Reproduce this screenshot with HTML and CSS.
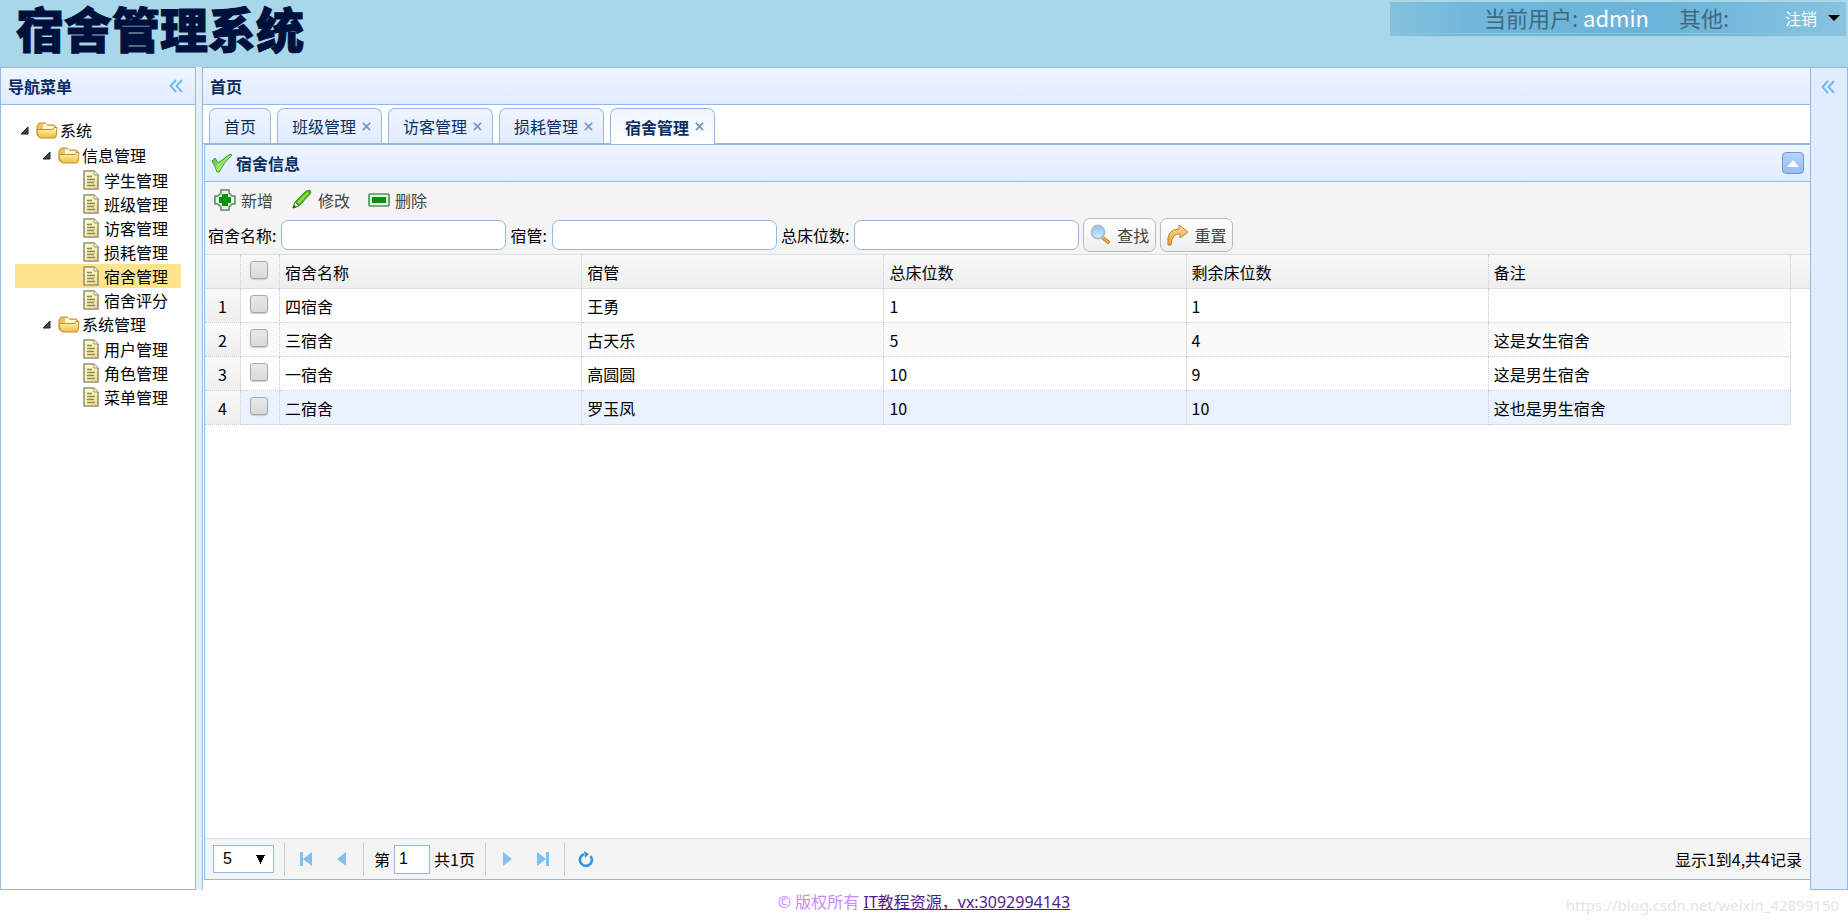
FILE: index.html
```html
<!DOCTYPE html>
<html lang="zh-CN">
<head>
<meta charset="utf-8">
<title>宿舍管理系统</title>
<link rel="stylesheet" href="styles.css">
</head>
<body>
<svg class="defs" aria-hidden="true">
  <defs>
    <linearGradient id="gold" x1="0" y1="0" x2="0" y2="1"><stop offset="0" stop-color="#fff6b8"/><stop offset="1" stop-color="#f0bd3e"/></linearGradient>
    <linearGradient id="leaf" x1="0" y1="0" x2="1" y2="1"><stop offset="0" stop-color="#3fae35"/><stop offset=".6" stop-color="#a6f06a"/><stop offset="1" stop-color="#3d9b36"/></linearGradient>
    <linearGradient id="orange" x1="0" y1="0" x2="0" y2="1"><stop offset="0" stop-color="#fde3a0"/><stop offset="1" stop-color="#f09a1c"/></linearGradient>
    <linearGradient id="lens" x1="0" y1="0" x2="0" y2="1"><stop offset="0" stop-color="#8cc3fa"/><stop offset="1" stop-color="#d3edff"/></linearGradient>
    <linearGradient id="paper" x1="0" y1="0" x2="1" y2="1"><stop offset="0" stop-color="#fffbd0"/><stop offset=".6" stop-color="#f7f2a6"/><stop offset="1" stop-color="#f5c987"/></linearGradient>
  </defs>
  <symbol id="folder" viewBox="0 0 22 18">
    <path d="M1 14V5l2-3h6l2 2h7l2 2v9l-1 1H3z" fill="#ecc65c" stroke="#b98d2c"/>
    <path d="M7 3h3l2 2h6v3H7z" fill="#fff7d8"/>
    <path d="M1 8.500h16l1-2h3l-1 9-1 1.500H5Q3 17 2 14z" fill="url(#gold)" stroke="#c0922f"/>
  </symbol>
  <symbol id="doc" viewBox="0 0 16 20">
    <path d="M1 1h10l4 4v14H1z" fill="url(#paper)" stroke="#98937d" stroke-width="1.600"/>
    <path d="M11 1v4h4" fill="#fff" stroke="#98937d"/>
    <path d="M4 6.500h5M4 9.500h8M4 12.500h7M4 15.500h8" stroke="#8b8761" stroke-width="1.300"/>
  </symbol>
  <symbol id="arrow" viewBox="0 0 9 9"><path d="M8 1v7H1z" fill="#444" stroke="#222"/></symbol>
  <symbol id="chevrons" viewBox="0 0 14 14"><path d="M7 1 1.500 7 7 13M13 1 7.500 7 13 13" fill="none" stroke="#6fb7f0" stroke-width="1.900"/></symbol>
  <symbol id="close" viewBox="0 0 10 10"><path d="M1 1l8 8M9 1l-8 8" stroke="#7d97c6" stroke-width="2"/></symbol>
</svg>

<header class="banner">
  <h1 class="logo">宿舍管理系统</h1>
  <div class="userbar">
    <span>当前用户: <strong class="user">admin</strong></span>
    <span class="other">其他:</span>
    <button class="logout" type="button">注销<svg width="12" height="6" viewBox="0 0 12 6"><path d="M0 0h12L6 6z"/></svg></button>
  </div>
</header>

<main class="layout">
  <nav class="west" aria-label="导航菜单">
    <div class="head"><span>导航菜单</span><button class="bare" type="button" aria-label="收起"><svg width="14" height="14"><use href="#chevrons"/></svg></button></div>
    <ul class="tree">
      <li><a class="node" href="#"><svg class="arrow"><use href="#arrow"/></svg><svg class="folder"><use href="#folder"/></svg>系统</a>
        <ul>
          <li><a class="node l2" href="#"><svg class="arrow"><use href="#arrow"/></svg><svg class="folder"><use href="#folder"/></svg>信息管理</a>
            <ul>
              <li><a class="node l3" href="#"><svg class="doc"><use href="#doc"/></svg>学生管理</a></li>
              <li><a class="node l3" href="#"><svg class="doc"><use href="#doc"/></svg>班级管理</a></li>
              <li><a class="node l3" href="#"><svg class="doc"><use href="#doc"/></svg>访客管理</a></li>
              <li><a class="node l3" href="#"><svg class="doc"><use href="#doc"/></svg>损耗管理</a></li>
              <li><a class="node l3 selected" href="#"><svg class="doc"><use href="#doc"/></svg>宿舍管理</a></li>
              <li><a class="node l3" href="#"><svg class="doc"><use href="#doc"/></svg>宿舍评分</a></li>
            </ul>
          </li>
          <li><a class="node l2" href="#"><svg class="arrow"><use href="#arrow"/></svg><svg class="folder"><use href="#folder"/></svg>系统管理</a>
            <ul>
              <li><a class="node l3" href="#"><svg class="doc"><use href="#doc"/></svg>用户管理</a></li>
              <li><a class="node l3" href="#"><svg class="doc"><use href="#doc"/></svg>角色管理</a></li>
              <li><a class="node l3" href="#"><svg class="doc"><use href="#doc"/></svg>菜单管理</a></li>
            </ul>
          </li>
        </ul>
      </li>
    </ul>
  </nav>

  <section class="center">
    <div class="head"><span>首页</span></div>
    <div class="tabs">
      <button class="tab" type="button">首页</button>
      <button class="tab" type="button">班级管理<svg width="9" height="9"><use href="#close"/></svg></button>
      <button class="tab" type="button">访客管理<svg width="9" height="9"><use href="#close"/></svg></button>
      <button class="tab" type="button">损耗管理<svg width="9" height="9"><use href="#close"/></svg></button>
      <button class="tab active" type="button">宿舍管理<svg width="9" height="9"><use href="#close"/></svg></button>
    </div>
    <div class="panel">
      <div class="head">
        <span class="title"><svg width="22" height="20" viewBox="0 0 22 20"><path d="M1 8 4 5l3 5L19 1l2 1Q13 9 8 19H6Q4 13 1 8z" fill="url(#leaf)" stroke="#3f9a42"/></svg>宿舍信息</span>
        <button class="collapse" type="button" aria-label="折叠"><svg width="12" height="7" viewBox="0 0 12 7"><path d="M0 7h12L6 0z" fill="#fff"/></svg></button>
      </div>
      <div class="toolbar">
        <div class="actions">
          <button type="button"><svg width="22" height="22" viewBox="0 0 22 22"><path d="M7 1h8v3l3 3h3v8h-3l-3 3v3H7v-3l-3-3H1V7h3l3-3z" fill="#edf5e9" stroke="#4c9159" stroke-width="1.500"/><path d="M8 5h6v3h3v6h-3v3H8v-3H5V8h3z" fill="#0d8f12"/></svg>新增</button>
          <button type="button"><svg width="22" height="22" viewBox="0 0 22 22"><path d="M2 19 4 13 15 2l4-1 1 3L8 17z" fill="#39ad16" stroke="#4f9b37"/><path d="M6 13 16 3l2 1L8 15z" fill="#8be63d"/><path d="M2 19l2-6 4 4z" fill="#dfe9cb" stroke="#5b8b43"/><path d="M2 19l1-3 2 2z" fill="#263b1e"/></svg>修改</button>
          <button type="button"><svg width="22" height="22" viewBox="0 0 22 22"><rect x="1" y="5" width="20" height="12" rx="1" fill="#e5f2e1" stroke="#4c9159" stroke-width="1.600"/><path d="M4 8h14v6H4z" fill="#0d8f12"/></svg>删除</button>
        </div>
        <form class="search">
          <label for="dorm">宿舍名称:</label><input id="dorm" type="text">
          <label for="keeper">宿管:</label><input id="keeper" type="text">
          <label for="beds">总床位数:</label><input id="beds" type="text">
          <button class="push" type="button"><svg width="22" height="22" viewBox="0 0 22 22"><path d="M13 12l7 6-2 2-7-6z" fill="#f5a63b" stroke="#b8854a"/><circle cx="8" cy="8" r="6.500" fill="url(#lens)" stroke="#b4bcc8" stroke-width="1.800"/></svg>查找</button>
          <button class="push" type="button"><svg width="22" height="22" viewBox="0 0 22 22"><path d="M1 21Q-1 5 12 5V1l9 7-8 6v-4Q5 9 4 21z" fill="url(#orange)" stroke="#a98653"/></svg>重置</button>
        </form>
      </div>
      <div class="grid">
        <table>
          <colgroup><col class="c-num"><col class="c-check"><col><col><col><col><col><col class="c-scroll"></colgroup>
          <thead>
            <tr><th></th><th class="check"><input type="checkbox" aria-label="全选"></th><th>宿舍名称</th><th>宿管</th><th>总床位数</th><th>剩余床位数</th><th>备注</th><th class="spare"></th></tr>
          </thead>
          <tbody>
            <tr><td class="num">1</td><td class="check"><input type="checkbox" aria-label="选择 1"></td><td>四宿舍</td><td>王勇</td><td>1</td><td>1</td><td></td><td class="spare"></td></tr>
            <tr class="alt"><td class="num">2</td><td class="check"><input type="checkbox" aria-label="选择 2"></td><td>三宿舍</td><td>古天乐</td><td>5</td><td>4</td><td>这是女生宿舍</td><td class="spare"></td></tr>
            <tr><td class="num">3</td><td class="check"><input type="checkbox" aria-label="选择 3"></td><td>一宿舍</td><td>高圆圆</td><td>10</td><td>9</td><td>这是男生宿舍</td><td class="spare"></td></tr>
            <tr class="over"><td class="num">4</td><td class="check"><input type="checkbox" aria-label="选择 4"></td><td>二宿舍</td><td>罗玉凤</td><td>10</td><td>10</td><td>这也是男生宿舍</td><td class="spare"></td></tr>
          </tbody>
        </table>
      </div>
      <div class="pager">
        <select aria-label="每页条数"><option>5</option></select>
        <i class="sep"></i>
        <button class="bare" type="button" aria-label="首页"><svg width="14" height="14" viewBox="0 0 14 14"><path d="M1 0h3v14H1zM13 0v14L4 7z" fill="#7fc0ee"/></svg></button>
        <button class="bare" type="button" aria-label="上一页"><svg width="14" height="14" viewBox="0 0 14 14"><path d="M11 0v14L2 7z" fill="#7fc0ee"/></svg></button>
        <i class="sep"></i>
        <label class="page">第<input type="text" value="1">共1页</label>
        <i class="sep"></i>
        <button class="bare" type="button" aria-label="下一页"><svg width="14" height="14" viewBox="0 0 14 14"><path d="M3 0v14l9-7z" fill="#7fc0ee"/></svg></button>
        <button class="bare" type="button" aria-label="末页"><svg width="14" height="14" viewBox="0 0 14 14"><path d="M1 0v14l9-7zM10 0h3v14h-3z" fill="#7fc0ee"/></svg></button>
        <i class="sep"></i>
        <button class="bare" type="button" aria-label="刷新"><svg width="16" height="16" viewBox="0 0 16 16"><path d="M12.500 5A6 6 0 1 1 6 3.200" fill="none" stroke="#3096de" stroke-width="2.600"/><path d="M6 0l5 3-4 4z" fill="#3096de"/></svg></button>
        <span class="info">显示1到4,共4记录</span>
      </div>
    </div>
  </section>

  <aside class="east"><button class="bare" type="button" aria-label="展开"><svg width="14" height="14"><use href="#chevrons"/></svg></button></aside>
</main>

<footer class="foot">© 版权所有 <a href="#">IT教程资源，vx:3092994143</a><span class="mark">https://blog.csdn.net/weixin_42899150</span></footer>
</body>
</html>
```
FILE: styles.css
```css
* { box-sizing: border-box; }
body {
  margin: 0;
  min-height: 100vh;
  display: flex;
  flex-direction: column;
  background: #fff;
  color: #000;
  font: 16px/24px "Noto Sans CJK SC", sans-serif;
}
button, input, select { font: inherit; color: inherit; margin: 0; }
button { cursor: pointer; padding: 0; }
svg { flex: none; display: block; }
ul { list-style: none; margin: 0; padding: 0; }
.defs { position: absolute; width: 0; height: 0; }
.bare { border: 0; background: none; display: flex; }

/* Banner */
.banner {
  height: 67px;
  display: flex;
  justify-content: space-between;
  align-items: flex-start;
  padding: 2px 2px 0 16px;
  background: #a8d7e9;
}
.logo {
  margin: 0;
  font-size: 48px;
  line-height: 50px;
  font-weight: 900;
  color: #00103c;
  -webkit-text-stroke: 1px #00103c;
}
.userbar {
  width: 456px;
  height: 34px;
  display: flex;
  align-items: center;
  padding: 0 6px 4px 94px;
  background:
    linear-gradient(#8ac5e0, #8ac5e0) 0 31px / 100% 1px no-repeat,
    linear-gradient(90deg, #84c1dd, #6fb6da 20%, #6bb3d9 60%, #88c3df);
  color: #40697f;
  font-size: 22px;
  line-height: 28px;
}
.user { font-weight: 400; color: #fff; }
.other { margin-left: 30px; }
.logout {
  margin-left: auto;
  display: flex;
  align-items: center;
  gap: 11px;
  border: 0;
  background: none;
  color: #fff;
  font-size: 16px;
  padding-top: 2px;
}
.logout svg { fill: #000; }

/* Regions */
.layout { flex: 1; display: flex; background: #e6eef8; }
.head {
  height: 37px;
  display: flex;
  align-items: center;
  justify-content: space-between;
  padding: 0 12px 0 7px;
  border-bottom: 1px solid #95b8e7;
  background: linear-gradient(#eff5ff, #e0ecff);
  color: #0e2d5f;
  font-weight: 700;
}
.west {
  width: 196px;
  margin-right: 6px;
  border: 1px solid #95b8e7;
  background: #fff;
}
.center {
  flex: 1;
  min-width: 0;
  display: flex;
  flex-direction: column;
  border: solid #95b8e7;
  border-width: 1px 0 0 1px;
  background: #fff;
}
.east {
  width: 38px;
  display: flex;
  justify-content: center;
  align-items: flex-start;
  padding: 12px 2px 0 0;
  border: 1px solid #95b8e7;
  background: #e0ecff;
}

/* Tree */
.tree { padding: 13px 14px; }
.tree ul { padding-top: 1px; }
.node {
  display: flex;
  align-items: center;
  height: 24px;
  padding-left: 5px;
  color: #000;
  text-decoration: none;
}
.l2 { padding-left: 27px; }
.l3 { padding-left: 68px; }
.selected { background: #ffe48d; }
.arrow { width: 9px; height: 9px; margin-right: 7px; }
.folder { width: 22px; height: 18px; margin-right: 2px; }
.doc { width: 16px; height: 20px; margin-right: 5px; }

/* Tabs */
.tabs { display: flex; gap: 6px; padding: 3px 6px 0; border-bottom: 1px solid #95b8e7; }
.tab {
  display: flex;
  align-items: center;
  gap: 6px;
  height: 35px;
  padding: 0 10px 0 14px;
  border: 1px solid #95b8e7;
  border-bottom: 0;
  border-radius: 7px 7px 0 0;
  background: linear-gradient(#eff5ff, #e0ecff);
  color: #0e2d5f;
}
.tab:first-child { padding: 0 14px; }
.tab.active {
  margin-bottom: -1px;
  height: 36px;
  background: linear-gradient(#eff5ff, #fff);
  font-weight: 700;
}

/* Panel */
.panel {
  flex: 1;
  display: flex;
  flex-direction: column;
  margin: 0 0 10px 1px;
  border: solid #95b8e7;
  border-width: 1px 0 1px 1px;
}
.panel .head { padding: 0 6px; }
.title { display: flex; align-items: center; gap: 3px; }
.collapse {
  width: 22px;
  height: 22px;
  display: flex;
  align-items: center;
  justify-content: center;
  border: 1px solid #7098d4;
  border-radius: 4px;
  background: linear-gradient(#b7d3fb, #98bcf2);
}
.toolbar { background: #f4f4f4; border-bottom: 1px solid #ddd; padding: 3px 3px 2px; }
.actions { display: flex; gap: 18px; padding: 3px 6px; }
.actions button, .push {
  display: flex;
  align-items: center;
  gap: 5px;
  border: 0;
  background: none;
  color: #444;
}
.search { display: flex; align-items: center; gap: 4px; padding-top: 3px; }
.search label { margin-right: 1px; }
.search input {
  width: 225px;
  height: 30px;
  padding: 0 6px;
  border: 1px solid #95b8e7;
  border-radius: 7px;
  background: #fff;
}
.search .push {
  height: 34px;
  padding: 0 6px;
  border: 1px solid #bbb;
  border-radius: 7px;
  background: linear-gradient(#fff, #eee);
}

/* Grid */
.grid { flex: 1; }
table { width: 100%; table-layout: fixed; border-spacing: 0; }
.c-num { width: 36px; }
.c-check { width: 39px; }
.c-scroll { width: 19px; }
th, td {
  height: 34px;
  padding: 0 5px;
  text-align: left;
  font-weight: 400;
  border: dotted #ccc;
  border-width: 0 1px 1px 0;
}
thead tr { background: linear-gradient(#f9f9f9, #ededed); }
th { border-bottom: 1px solid #ddd; }
.num { text-align: center; background: linear-gradient(#f9f9f9, #eee); }
.alt { background: #fafafa; }
.over { background: #eaf2ff; }
th.spare { border-right: 0; }
td.spare { border: 0; background: #fff; }
.check { padding: 0 2px 4px 0; text-align: center; line-height: 18px; }
.check input {
  appearance: none;
  display: block;
  width: 18px;
  height: 18px;
  margin: 0 auto;
  border: 1px solid #a8a8a8;
  border-radius: 3px;
  background: linear-gradient(#e8e8e8, #dadada);
  box-shadow: 0 1px 1px #ccc;
}

/* Pager */
.pager {
  height: 41px;
  display: flex;
  align-items: center;
  padding: 0 8px;
  border-top: 1px solid #ddd;
  background: #f4f4f4;
}
.pager select {
  appearance: none;
  width: 61px;
  height: 28px;
  padding: 0 9px;
  border: 1px solid #95b8e7;
  border-radius: 0;
  background: #fff;
  background-image: conic-gradient(from -27deg at 50% 100%, #000 54deg, transparent 0);
  background-size: 9px 9px;
  background-position: 42px 9px;
  background-repeat: no-repeat;
  font-family: "Liberation Sans", Arial, sans-serif;
}
.sep { width: 1px; height: 33px; background: #ccc; margin: 0 10px; }
.pager .bare { width: 22px; justify-content: center; }
.pager .bare + .bare { margin-left: 14px; }
.page { display: flex; align-items: center; gap: 4px; }
.page input {
  width: 36px;
  height: 29px;
  padding: 0 4px;
  border: 1px solid #95b8e7;
  background: #fff;
  font-family: "Liberation Sans", Arial, sans-serif;
}
.info { margin-left: auto; }

/* Footer */
.foot {
  position: relative;
  height: 33px;
  text-align: center;
  color: #c8f;
  font-family: "Noto Sans", "Noto Sans CJK SC", sans-serif;
}
.foot a { color: #551a8b; }
.mark { position: absolute; right: 9px; bottom: 6px; color: #e4e4e4; font-size: 15px; }
```
